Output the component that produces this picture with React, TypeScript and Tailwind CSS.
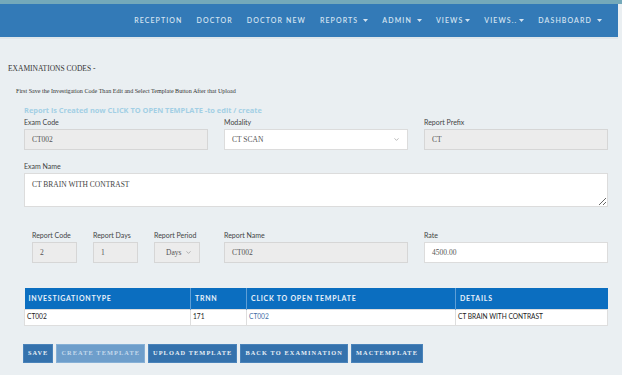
import { ChevronDown } from 'lucide-react';

const navItems = [
  { label: 'RECEPTION' },
  { label: 'DOCTOR' },
  { label: 'DOCTOR NEW' },
  { label: 'REPORTS', caret: true },
  { label: 'ADMIN', caret: true },
  { label: 'VIEWS', caret: true, tight: true },
  { label: 'VIEWS..', caret: true, tight: true },
  { label: 'DASHBOARD', caret: true },
];

function Caret() {
  return (
    <svg width="5" height="3" viewBox="0 0 5 3" className="fill-[#d3e3f1]">
      <path d="M0 0h5L2.5 3z" />
    </svg>
  );
}

function Label({ children }: { children: string }) {
  return <div className="font-['Lato'] text-[7px] leading-[10px] text-[#444] mb-[2px]">{children}</div>;
}

function Field({ value, white, className = '' }: { value: string; white?: boolean; className?: string }) {
  return (
    <div
      className={`h-[21px] border flex items-center px-[7px] font-['Liberation_Serif'] text-[7.5px] text-[#555] ${
        white ? 'bg-white border-[#dcdcdc]' : 'bg-[#ececec] border-[#d6d6d6]'
      } ${className}`}
    >
      {value}
    </div>
  );
}

function SelectBox({ value, white, className = '', pad = 'px-[7px]' }: { value: string; white?: boolean; className?: string; pad?: string }) {
  return (
    <div
      className={`h-[21px] border flex items-center justify-between ${pad} font-['Liberation_Serif'] text-[7.5px] text-[#555] ${
        white ? 'bg-white border-[#dcdcdc]' : 'bg-[#ececec] border-[#d6d6d6]'
      } ${className}`}
    >
      <span>{value}</span>
      <ChevronDown size={7} strokeWidth={1.5} className="text-[#666]" />
    </div>
  );
}

const btn =
  "h-[19px] px-[4px] flex items-center font-['Liberation_Serif'] font-bold text-[6.3px] tracking-[1.1px] border";

export default function App() {
  return (
    <div className="w-[622px] h-[375px] bg-[#eaeff2] overflow-hidden">
      <div className="h-[4px] bg-[#74a9ba]" />
      <div className="h-[33px] bg-[#337ab7] mr-[4px] flex items-center justify-end pr-[16px] gap-[14px] font-['Lato'] font-semibold text-[7px] tracking-[1.1px] text-[#d3e3f1]">
        {navItems.map((n) => (
          <div key={n.label} className={`flex items-center ${n.tight ? 'gap-[2px]' : 'gap-[5px]'}`}>
            <span>{n.label}</span>
            {n.caret && <Caret />}
          </div>
        ))}
      </div>
      <div className="h-[2px] bg-[#dfe6ea] mr-[4px]" />

      <div className="px-[8px] pt-[25px] font-['Liberation_Serif'] text-[7.5px] text-[#333] leading-[10px]">
        EXAMINATIONS CODES -
      </div>
      <div className="pl-[16px] pt-[13px] font-['Liberation_Serif'] text-[6.1px] text-[#333] leading-[9px]">
        First Save the Investigation Code Than Edit and Select Template Button After that Upload
      </div>

      <div className="pl-[24px] w-[608px]">
        <div className="pt-[9px] font-['Open_Sans'] font-bold text-[7.4px] leading-[10px] text-[#a3cfe5]">
          Report is Created now CLICK TO OPEN TEMPLATE -to edit / create
        </div>

        <div className="grid grid-cols-3 gap-x-[16px] pt-[2px]">
          <div>
            <Label>Exam Code</Label>
            <Field value="CT002" />
          </div>
          <div>
            <Label>Modality</Label>
            <SelectBox value="CT SCAN" white />
          </div>
          <div>
            <Label>Report Prefix</Label>
            <Field value="CT" />
          </div>
        </div>

        <div className="pt-[11px]">
          <Label>Exam Name</Label>
          <textarea
            readOnly
            value="CT BRAIN WITH CONTRAST"
            className="block w-full h-[34px] bg-white border border-[#dcdcdc] px-[7px] py-[6px] font-['Liberation_Serif'] text-[7.5px] leading-[10px] text-[#444] outline-none"
          />
        </div>

        <div className="grid grid-cols-3 gap-x-[16px] pt-[23px]">
          <div className="flex gap-[16px] pl-[8px]">
            <div className="w-[45px]">
              <Label>Report Code</Label>
              <Field value="2" />
            </div>
            <div className="w-[45px]">
              <Label>Report Days</Label>
              <Field value="1" />
            </div>
            <div className="w-[46px]">
              <Label>Report Period</Label>
              <SelectBox value="Days" pad="pl-[11px] pr-[7px]" />
            </div>
          </div>
          <div>
            <Label>Report Name</Label>
            <Field value="CT002" />
          </div>
          <div>
            <Label>Rate</Label>
            <Field value="4500.00" white />
          </div>
        </div>

        <table className="mt-[25px] w-full border-collapse font-['Lato'] text-[#222]">
          <thead>
            <tr className="bg-[#0b6ec0] text-[#e8f1fa] text-[7px] font-bold tracking-[0.75px] text-left">
              <th className="h-[21px] w-[166px] px-[4px] border-r border-[#5f9fd6] font-bold">INVESTIGATIONTYPE</th>
              <th className="w-[56px] px-[4px] border-r border-[#5f9fd6] font-bold">TRNN</th>
              <th className="w-[209px] px-[4px] border-r border-[#5f9fd6] font-bold">CLICK TO OPEN TEMPLATE</th>
              <th className="px-[4px] font-bold">DETAILS</th>
            </tr>
          </thead>
          <tbody>
            <tr className="bg-white text-[6.6px]">
              <td className="h-[16px] px-[2px] border border-[#dedede]">CT002</td>
              <td className="px-[2px] border border-[#dedede]">171</td>
              <td className="px-[2px] border border-[#dedede] text-[#3f6fa8]">CT002</td>
              <td className="px-[2px] border border-[#dedede]">CT BRAIN WITH CONTRAST</td>
            </tr>
          </tbody>
        </table>

        <div className="flex gap-[3px] pt-[18px] -ml-[1px]">
          <div className={`${btn} bg-[#3572ad] border-[#4a83ba] text-[#e8eff6]`}>SAVE</div>
          <div className={`${btn} bg-[#6e9ecb] border-[#86b0d6] text-[#c4d9ec]`}>CREATE TEMPLATE</div>
          <div className={`${btn} bg-[#3572ad] border-[#4a83ba] text-[#e8eff6]`}>UPLOAD TEMPLATE</div>
          <div className={`${btn} bg-[#3572ad] border-[#4a83ba] text-[#e8eff6]`}>BACK TO EXAMINATION</div>
          <div className={`${btn} bg-[#3572ad] border-[#4a83ba] text-[#e8eff6]`}>MACTEMPLATE</div>
        </div>
      </div>
    </div>
  );
}
